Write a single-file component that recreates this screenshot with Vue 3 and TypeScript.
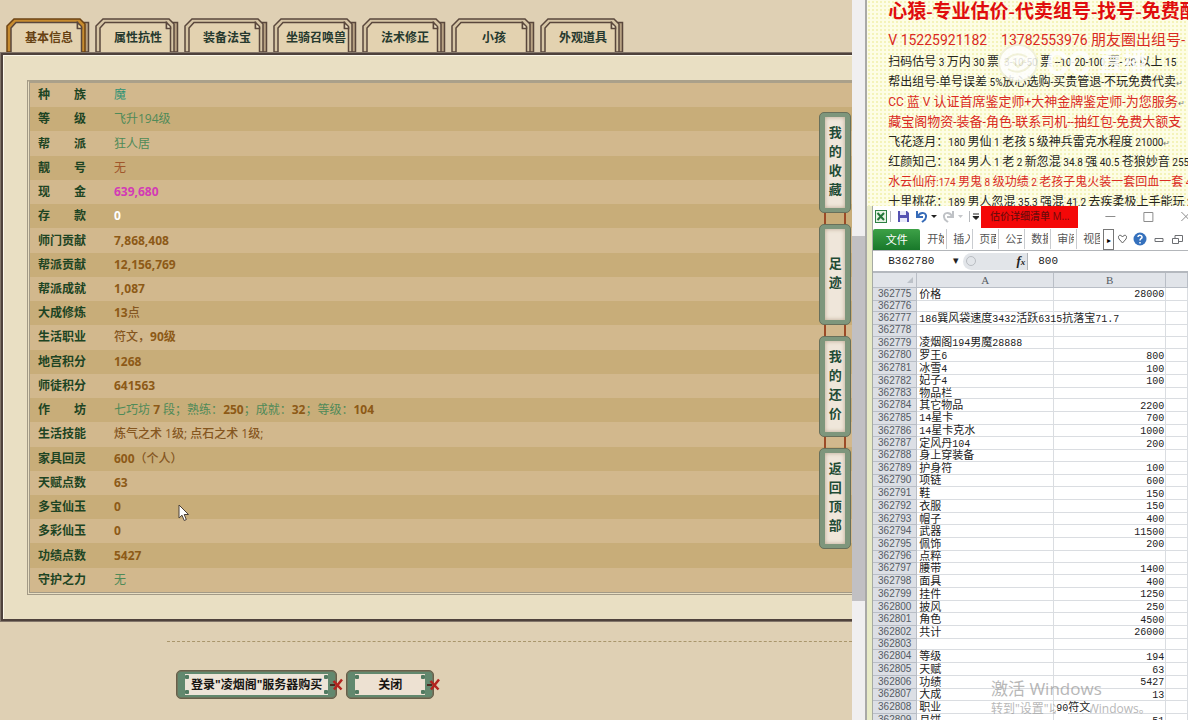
<script setup lang="ts">
interface Part { t: string; c?: string }
interface Row { label: string; parts: Part[] }

const tabs: string[] = ['基本信息', '属性抗性', '装备法宝', '坐骑召唤兽', '法术修正', '小孩', '外观道具']

const num = (t: string): Part[] => [{ t, c: 'num' }]
const rows: Row[] = [
  { label: '种族', parts: [{ t: '魔', c: 'teal' }] },
  { label: '等级', parts: [{ t: '飞升194级', c: 'green' }] },
  { label: '帮派', parts: [{ t: '狂人居', c: 'green' }] },
  { label: '靓号', parts: [{ t: '无', c: 'rust' }] },
  { label: '现金', parts: [{ t: '639,680', c: 'pink' }] },
  { label: '存款', parts: [{ t: '0', c: 'white' }] },
  { label: '师门贡献', parts: num('7,868,408') },
  { label: '帮派贡献', parts: num('12,156,769') },
  { label: '帮派成就', parts: num('1,087') },
  { label: '大成修炼', parts: [{ t: '13', c: 'num' }, { t: '点', c: 'brown' }] },
  { label: '生活职业', parts: [{ t: '符文，', c: 'brown' }, { t: '90级', c: 'num' }] },
  { label: '地宫积分', parts: num('1268') },
  { label: '师徒积分', parts: num('641563') },
  {
    label: '作坊',
    parts: [
      { t: '七巧坊 ', c: 'green' }, { t: '7', c: 'num' }, { t: ' 段；熟练：', c: 'green' }, { t: '250', c: 'num' },
      { t: '；成就：', c: 'green' }, { t: '32', c: 'num' }, { t: '；等级：', c: 'green' }, { t: '104', c: 'num' },
    ],
  },
  { label: '生活技能', parts: [{ t: '炼气之术 1级; 点石之术 1级;', c: 'skill' }] },
  { label: '家具回灵', parts: [{ t: '600', c: 'num' }, { t: '（个人）', c: 'brown' }] },
  { label: '天赋点数', parts: num('63') },
  { label: '多宝仙玉', parts: num('0') },
  { label: '多彩仙玉', parts: num('0') },
  { label: '功绩点数', parts: num('5427') },
  { label: '守护之力', parts: [{ t: '无', c: 'green' }] },
]

const sideLinks: string[] = ['我的收藏', '足迹', '我的还价', '返回顶部']

interface Line { text: string; kind: string }
const lines: Line[] = [
  { text: '心猿-专业估价-代卖组号-找号-免费配', kind: 'title' },
  { text: 'V 15225921182    13782553976 朋友圈出组号-', kind: 'phone' },
  { text: '扫码估号 3 万内 30 票  3-10-50 票 --10-20-100 票- 20 以上 15', kind: 'body' },
  { text: '帮出组号-单号误差 5%放心选购-买贵管退-不玩免费代卖↵', kind: 'body' },
  { text: 'CC 蓝 V 认证首席鉴定师+大神金牌鉴定师-为您服务↵', kind: 'red' },
  { text: '藏宝阁物资-装备-角色-联系司机--抽红包-免费大额支', kind: 'red' },
  { text: '飞花逐月：180 男仙 1 老孩 5 级神兵雷克水程度 21000↵', kind: 'body' },
  { text: '红颜知己：184 男人 1 老 2 新忽混 34.8 强 40.5 苍狼妙音 255', kind: 'body' },
  { text: '水云仙府:174 男鬼 8 级功绩 2 老孩子鬼火装一套回血一套 4', kind: 'body redtext' },
  { text: '十里桃花：189 男人忽混 35.3 强混 41.2 去疾柔极上手能玩 2', kind: 'body' },
]
const split = (s: string): Part[] =>
  (s.match(/[\x20-\x7e]+|↵|[^\x20-\x7e↵]+/g) ?? []).map((t) => ({
    t,
    c: /[\x20-\x7e]/.test(t[0]) ? 'latin' : t === '↵' ? 'mark' : '',
  }))

const ribbon: string[] = ['开始', '插入', '页面', '公式', '数据', '审阅', '视图']

const cells: [string, string][] = [
  ['价格', '28000'], ['', ''], ['186巽风袋速度3432活跃6315抗落宝71.7', ''], ['', ''], ['凌烟阁194男魔28888', ''],
  ['罗王6', '800'], ['冰雪4', '100'], ['妃子4', '100'], ['物品栏', ''], ['其它物品', '2200'], ['14星卡', '700'],
  ['14星卡克水', '1000'], ['定风丹104', '200'], ['身上穿装备', ''], ['护身符', '100'], ['项链', '600'], ['鞋', '150'],
  ['衣服', '150'], ['帽子', '400'], ['武器', '11500'], ['佩饰', '200'], ['点粹', ''], ['腰带', '1400'], ['面具', '400'],
  ['挂件', '1250'], ['披风', '250'], ['角色', '4500'], ['共计', '26000'], ['', ''], ['等级', '194'], ['天赋', '63'],
  ['功绩', '5427'], ['大成', '13'], ['职业', '90符文'], ['月饼', '51'],
]
</script>

<template>
  <div class="screen">
    <main class="game">
      <nav class="tabs">
        <button v-for="(t, i) in tabs" :key="t" type="button" class="tab" :class="{ active: i === 0 }">
          <svg class="tab-bg" viewBox="0 0 84 34" aria-hidden="true">
            <path class="back" d="M78 4.5H82.5V34H78Z" />
            <path class="frame" d="M1 34V8L8 1H74L79 6V34Z" />
            <path class="face" d="M5 34V10L10 4.500H71.500V10H75.500V34" />
            <path class="fold" d="M71.500 4.500L75.500 8.500V10.500H71.500Z" />
          </svg>
          <span>{{ t }}</span>
        </button>
      </nav>

      <section class="panel">
        <table class="info">
          <tbody>
            <tr v-for="r in rows" :key="r.label">
              <th scope="row"><span>{{ r.label }}</span></th>
              <td><span v-for="(p, i) in r.parts" :key="i" :class="p.c">{{ p.t }}</span></td>
            </tr>
          </tbody>
        </table>
      </section>

      <hr class="dots" />
      <div class="actions">
        <button v-for="b in ['登录&quot;凌烟阁&quot;服务器购买', '关闭']" :key="b" type="button" class="plaque">
          <span class="plate">
            <i class="stud tl"></i><i class="stud tr"></i><i class="stud bl"></i><i class="stud br"></i>
            {{ b }}
          </span>
          <svg class="knot" viewBox="0 0 13 13" aria-hidden="true">
            <path d="M0 7H5" stroke="#4b2a20" stroke-width="2" />
            <path d="M3.500 3L11.500 11.500M12 1.500L4 11.500" stroke="#b3231f" stroke-width="2.500" fill="none" />
          </svg>
        </button>
      </div>

      <nav class="side">
        <a v-for="s in sideLinks" :key="s" href="#" class="hang"><span>{{ s }}</span></a>
      </nav>

      <svg class="cursor" viewBox="0 0 12 19" aria-hidden="true">
        <path d="M1 1V14L4 11.200L6.200 16.500L8.300 15.600L6.200 10.500H10.500Z" fill="#fff" stroke="#4a4038" />
      </svg>
    </main>

    <div class="scroll"><i></i></div>

    <aside class="right">
      <article class="doc">
        <p v-for="l in lines" :key="l.text" :class="l.kind">
          <span v-for="(p, i) in split(l.text)" :key="i" :class="p.c">{{ p.t }}</span>
        </p>
        <div class="live">
          <svg viewBox="0 0 42 40" aria-hidden="true">
            <ellipse cx="21" cy="20" rx="19" ry="18" />
            <path d="M8 20C12 11 22 9 30 14M34 20C30 29 19 31 11 26M16 19L21 24L28 17" />
          </svg>
          <b>CC</b><span>直播</span>
        </div>
      </article>

      <section class="excel">
        <header class="titlebar">
          <svg class="quick" viewBox="0 0 106 22" aria-hidden="true">
            <rect x="2.500" y="4.500" width="11" height="12" fill="#e5f2e3" stroke="#2e8144" />
            <path d="M4.500 7L11 14M11 7L4.500 14" stroke="#23763a" stroke-width="2" />
            <path d="M17.500 5V16M96.500 5V16" stroke="#b6b9bd" />
            <path d="M25 5H34L36 7V16H25Z" fill="#5552b2" />
            <path d="M27 5H33V9H27ZM27 12H34V16H27Z" fill="#e8e9fa" />
            <path d="M44 5V11H50M45 10C48 5 54 7 53 11C53 14 50 15 49 16" fill="none" stroke="#366bb8" stroke-width="2" />
            <path d="M58 9H64L61 12Z" fill="#222" />
            <path d="M80 5V11H74M79 10C76 5 70 7 71 11C71 14 74 15 75 16" fill="none" stroke="#bfc2c6" stroke-width="2" />
            <path d="M85 9H90L87.500 12Z" fill="#c5c7ca" />
            <path d="M100 8H106M100 10.500H106L103 13.500Z" stroke="#222" fill="#222" />
          </svg>
          <strong>估价详细清单 M...</strong>
          <svg class="win" viewBox="0 0 92 22" aria-hidden="true">
            <path d="M11 10.500H21M49.500 6.500H58.500V15.500H49.500ZM87 6L96 15M96 6L87 15" fill="none" stroke="#8d8d8d" />
          </svg>
        </header>
        <div class="ribbon">
          <button type="button" class="file">文件</button>
          <button v-for="r in ribbon" :key="r" type="button" class="rtab"><span>{{ r }}</span></button>
          <button type="button" class="more" aria-label="更多">▸</button>
          <svg class="rib-icons" viewBox="0 0 76 22" aria-hidden="true">
            <path d="M8.500 14L5 10C3 6 7 5 8.500 8C10 5 14 6 12 10Z" fill="none" stroke="#666" />
            <circle cx="26" cy="10" r="6.500" fill="#3571bd" />
            <path d="M24 8C24 5.500 28.500 6 28 8.500C27.800 9.500 26 9.500 26 11.500M26 13V14.500" fill="none" stroke="#fff" stroke-width="1.500" />
            <path d="M41 9.500H49V12.500H41ZM58.500 9.500H64.500V14.500H58.500ZM61 9V6.500H68.500V12.500H65" fill="none" stroke="#6d6f73" />
          </svg>
        </div>
        <div class="formula">
          <input class="name" aria-label="名称框" value="B362780" />
          <span class="drop">▾</span>
          <span class="fx"><i></i><em>f<small>x</small></em></span>
          <input class="value" aria-label="编辑栏" value="800" />
        </div>
        <table class="sheet">
          <colgroup><col class="c0" /><col class="c1" /><col class="c2" /><col /></colgroup>
          <thead><tr><th class="corner"><i></i></th><th>A</th><th>B</th><th></th></tr></thead>
          <tbody>
            <tr v-for="(c, i) in cells" :key="i">
              <th scope="row">{{ 362775 + i }}</th>
              <td><span v-for="(p, k) in split(c[0])" :key="k" :class="p.c">{{ p.t }}</span></td>
              <td class="b" :class="{ left: c[1] === '90符文' }"><span v-for="(p, k) in split(c[1])" :key="k" :class="p.c">{{ p.t }}</span></td>
              <td></td>
            </tr>
          </tbody>
        </table>
      </section>
      <div class="activate"><b>激活 Windows</b><span>转到"设置"以激活 Windows。</span></div>
    </aside>
  </div>
</template>

<style>
html, body { margin: 0; overflow: hidden; }
</style>

<style scoped>
.screen {
  display: flex; height: 100vh; overflow: hidden;
  font: 12px/16px "Open Sans", "Noto Sans CJK SC", sans-serif; background: #dfd1b6;
}
button, input { font: inherit; border: 0; padding: 0; margin: 0; background: none; border-radius: 0; }
.game { position: relative; flex: 1; min-width: 0; overflow: hidden; background: #dfd0b4; }

.tabs { display: flex; gap: 5px; padding: 18px 0 0 6px; }
.tab { position: relative; flex: none; width: 84px; height: 34px; color: #26392e; font-weight: 600; text-align: center; white-space: nowrap; }
.tab span { position: relative; display: block; padding: 5px 0 0 2px; }
.tab-bg { position: absolute; inset: 0; width: 84px; height: 34px; }
.tab-bg path { stroke: #5a473c; stroke-width: 1.500; }
.back { fill: #b8a283; }
.frame { fill: #d6c5a5; }
.face { fill: #e3d2b0; }
.fold { fill: #efe3c6; }
.active { color: #674213; }
.active .frame { fill: #c78b2e; stroke: #6c4315; }
.active .fold { fill: #f3dfa9; }

.panel {
  margin: 1px 0 1px 1px; border: solid #4f423c; border-width: 2px 0 2px 2px; background: #e9dfc3;
  box-shadow: 0 0 0 1px #82756a, inset 1px 1px 0 #fdf9ea; padding: 25px 0 24px 24px;
}
.info { width: 100%; height: 515px; box-sizing: border-box; border-collapse: separate; border-spacing: 0; border: 3px double #a39a86; border-right: 0; border-top: 3px solid #aaa08a; }
.info tr { background: #d2b88d; }
.info tr:nth-child(even) { background: #c8ad79; }
.info th, .info td { padding: 0; text-align: left; vertical-align: middle; white-space: nowrap; line-height: 16px; }
.info th { width: 84px; padding-left: 8px; box-sizing: border-box; color: #1d4423; font-weight: 700; }
.info th span { display: block; width: 48px; text-align-last: justify; }
.info td span { white-space: pre; }
.num { color: #8d5a17; font-weight: 700; }
.brown, .skill { color: #85561f; font-weight: 500; }
.green { color: #4f8a58; }
.teal { color: #2f9274; }
.rust { color: #a0562b; }
.pink { color: #d33bb5; font-weight: 700; }
.white { color: #fff; font-weight: 700; }

.dots { margin: 20px 0 0 167px; border: 0; border-top: 1px dashed #a9966c; }
.actions { display: flex; gap: 9px; padding: 28px 0 0 176px; }
.plaque {
  position: relative; display: flex; height: 29px; box-sizing: border-box; padding: 3px 8px;
  border: 1px solid #685f4a; border-radius: 5px; background: #62886e; box-shadow: inset 0 0 0 1px #6f735b;
  color: #171512; font-weight: 700;
}
.plate { position: relative; min-width: 58px; padding: 0 6px; line-height: 22px; background: #ede4d8; }
.plaque:last-child .plate { background: #ede1d2; }
.stud { position: absolute; width: 4px; height: 4px; background: #517a61; border-radius: 1px; }
.tl { left: 0; top: 1px; } .tr { right: 0; top: 1px; } .bl { left: 0; bottom: 1px; } .br { right: 0; bottom: 1px; }
.knot { position: absolute; right: -7px; top: 7px; width: 13px; height: 13px; }

.side { position: absolute; right: 1px; top: 112px; display: grid; gap: 11px; }
.hang {
  position: relative; width: 32px; height: 101px; box-sizing: border-box; padding: 0 0 3px; display: grid; place-items: center;
  border: 1px solid #68705b; border-radius: 5px; background: #7e967c; text-decoration: none; color: #1f4b35; font-weight: 700;
}
.hang::before { content: ""; position: absolute; inset: 4px 5px; background: #efe6da; box-shadow: inset 0 0 4px #b9a58e; }
.hang span { position: relative; width: 13px; font-size: 13px; line-height: 19px; word-break: break-all; }
.hang:not(:last-child)::after {
  content: ""; position: absolute; left: 4px; right: 4px; top: 100px; height: 11px; border: solid #9c4b27; border-width: 0 2px;
}
.cursor { position: absolute; left: 178px; top: 504px; width: 12px; height: 19px; }

.scroll { width: 13px; display: grid; grid-template-rows: 236fr 365fr 119fr; background: #f0eff0; border-right: 2px solid #a9a9a7; box-sizing: content-box; }
.scroll i { grid-row: 2; background: #c1c0c3; }

.right { position: relative; width: 27%; display: flex; flex-direction: column; overflow: hidden; background: #e8ebc8; }
.doc {
  position: relative; height: 206px; flex: none; overflow: hidden; padding: 1px 0 0 21px; box-sizing: border-box; color: #25251d;
  background: radial-gradient(circle, #f4f3ba 1px, transparent 1px) 0 0 / 4px 4px #fdfde5;
  font-family: Roboto, "Noto Sans CJK SC", sans-serif;
}
.doc p { margin: 0; white-space: pre; font-size: 12px; line-height: 20px; height: 20px; }
.doc p .latin { font-size: 10px; }
.doc .title { font-family: "Liberation Serif", "Noto Sans CJK SC", serif; font-size: 19px; line-height: 22px; height: 29px; color: #e00d0d; font-weight: 700; }
.doc .title .latin { font-size: 19px; }
.doc .phone { font-size: 15px; height: 22px; color: #d92a22; }
.doc .phone .latin { font-size: 14px; }
.doc .red { font-size: 13px; color: #da2b24; }
.doc .red .latin { font-size: 12px; }
.doc .redtext { color: #da2b24; }
.doc p .mark { font-size: 8px; color: #777; }
.live { position: absolute; left: 130px; top: 43px; display: flex; align-items: center; gap: 7px; color: #fff; opacity: 0.85; font-size: 25px; line-height: 40px; }
.live svg { width: 42px; height: 40px; fill: #fff; stroke: #f0f0da; stroke-width: 2; }
.live b { font-size: 34px; }
.live span { font-weight: 700; }

.excel { flex: 1; min-height: 0; margin-left: 5px; overflow: hidden; background: #fff; border-left: 1px solid #a6aaa4; color: #222; }
.titlebar { display: flex; align-items: stretch; justify-content: space-between; height: 22px; }
.quick { width: 106px; height: 22px; flex: none; }
.titlebar strong { flex: none; width: 97px; box-sizing: border-box; margin-left: 2px; background: #f40808; color: #6d0b0b; font-size: 10px; line-height: 21px; font-weight: 500; text-align: center; }
.win { flex: 1; height: 22px; margin-left: 15px; }
.ribbon { display: flex; align-items: stretch; height: 23px; box-sizing: border-box; border-bottom: 1px solid #b3b6ba; font-size: 11px; padding-top: 1px; }
.file { width: 47px; flex: none; color: #fff; background: linear-gradient(#3da147, #18782a); border-radius: 2px 2px 0 0; margin-right: 1px; }
.rtab { flex: none; width: 26px; padding-left: 6px; color: #555; text-align: left; border-right: 1px solid #c9ccd0; height: 20px; }
.rtab span { display: block; width: 17px; overflow: hidden; white-space: nowrap; }
.ribbon .rtab:nth-last-child(3) { border-right: 0; }
.more { width: 11px; flex: none; border: 1px solid #777; font-size: 8px; }
.rib-icons { width: 76px; height: 22px; flex: none; }
.formula { display: flex; align-items: center; height: 20px; font: 11px/18px "Liberation Mono", monospace; }
.formula input { color: #222; min-width: 0; height: 18px; }
.name { width: 60px; padding-left: 15px; }
.drop { width: 15px; text-align: center; font-family: "DejaVu Sans", sans-serif; }
.fx { display: flex; align-items: center; justify-content: space-between; width: 62px; height: 17px; padding-right: 2px; background: #e2e5e9; border-radius: 9px 0 0 9px; border-right: 1px solid #b1b4b8; }
.fx i { width: 8px; height: 8px; margin-left: 3px; border: 1px solid #b9bdc2; border-radius: 50%; }
.fx em { font: italic bold 13px/16px "Liberation Serif", serif; }
.fx small { font-size: 9px; }
.formula .value { flex: 1; padding-left: 10px; }

.sheet {
  width: 100%; height: 456px; table-layout: fixed; border-collapse: separate; border-spacing: 0; border-top: 2px solid #b4b8be;
  font: 11px/12px "Liberation Serif", "Noto Sans CJK SC", serif;
}
.c0 { width: 44px; } .c1 { width: 137px; } .c2 { width: 112px; }
.sheet th, .sheet td { padding: 0; border: solid #dadde1; border-width: 0 1px 1px 0; white-space: nowrap; line-height: 10px; }
.sheet th { background: #dcdfe5; border-color: #b9bec6; color: #555b63; font-weight: 400; }
.sheet thead th { height: 14px; background: #e1e4e9; }
.sheet tbody th { font-family: "Liberation Sans", sans-serif; font-size: 10px; }
.sheet td { padding-left: 2px; }
.sheet .latin { font-family: "Liberation Mono", monospace; font-size: 10px; line-height: 8px; }
.sheet .b { text-align: right; padding-right: 1px; }
.sheet .left { text-align: left; }
.left span { position: relative; z-index: 2; background: #fff; }
.corner i { float: right; border: 3px solid transparent; border-right-color: #bcc1c8; border-bottom-color: #bcc1c8; margin-right: 3px; }

.right .activate { position: absolute; right: 36px; bottom: 3px; width: 161px; color: #898989; opacity: 0.6; pointer-events: none; white-space: nowrap; z-index: 1; }
.activate b { display: block; font-size: 17px; line-height: 22px; font-weight: 400; }
.activate span { display: block; font-size: 12px; line-height: 17px; }
</style>
